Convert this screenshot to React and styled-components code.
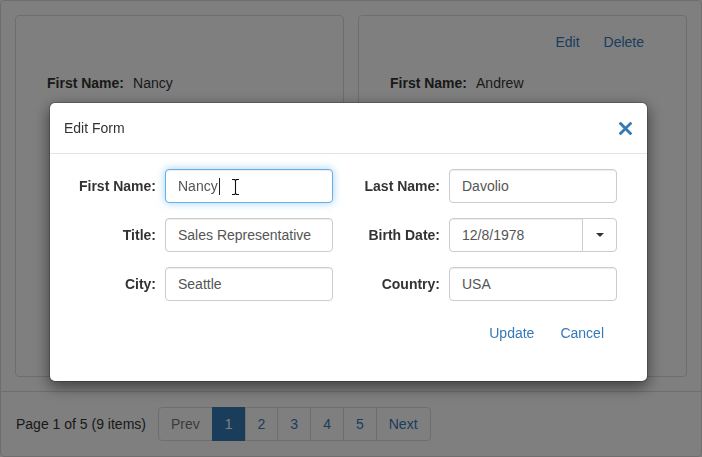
import React from "react";
import styled, { createGlobalStyle, css } from "styled-components";

const GlobalStyle = createGlobalStyle`
  html, body { margin: 0; padding: 0; background: #fff; }
  body {
    font-family: "Liberation Sans", Arial, Helvetica, sans-serif;
    font-size: 14px;
    line-height: 1.42857;
    color: #333;
  }
  *, *::before, *::after { box-sizing: border-box; }
`;

const Page = styled.div`
  width: 702px;
  height: 457px;
  border: 1px solid #ddd;
  border-radius: 4px;
  display: flex;
  flex-direction: column;
  overflow: hidden;
`;

const CardGrid = styled.div`
  flex: 1;
  padding: 14px;
  display: grid;
  grid-template-columns: 1fr 1fr;
  gap: 14px;
`;

const Card = styled.div`
  border: 1px solid #ddd;
  border-radius: 4px;
  padding: 9px 30px 0 31px;
`;

const CardActions = styled.div`
  display: flex;
  justify-content: flex-end;
  height: 34px;
  visibility: ${(p) => (p.$hidden ? "hidden" : "visible")};
`;

const LinkButton = styled.button`
  background: none;
  border: 0;
  padding: 7px 12px;
  font: inherit;
  line-height: 20px;
  color: #337ab7;
  cursor: pointer;
`;

const FieldRow = styled.div`
  margin-top: 14px;
  display: flex;
  gap: 9px;
  line-height: 20px;
`;

const FieldLabel = styled.span`
  font-weight: bold;
`;

const PagerBar = styled.div`
  border-top: 1px solid #ddd;
  padding: 15px;
  display: flex;
  align-items: center;
  gap: 12px;
`;

const PagerInfo = styled.span`
  line-height: 20px;
`;

const Pagination = styled.div`
  display: flex;
`;

const PageItem = styled.a`
  display: block;
  padding: 6px 12px;
  line-height: 20px;
  border: 1px solid #ddd;
  margin-left: -1px;
  color: #337ab7;
  background: #fff;
  text-decoration: none;
  &:first-child {
    margin-left: 0;
    border-radius: 4px 0 0 4px;
  }
  &:last-child {
    border-radius: 0 4px 4px 0;
  }
  ${(p) =>
    p.$active &&
    css`
      background: #337ab7;
      border-color: #337ab7;
      color: #fff;
    `}
  ${(p) =>
    p.$disabled &&
    css`
      color: #777;
    `}
`;

const Overlay = styled.div`
  position: fixed;
  inset: 0;
  z-index: 10;
  background: rgba(0, 0, 0, 0.5);
`;

const Modal = styled.div`
  width: 599px;
  margin: 102px 0 0 49px;
  background: #fff;
  background-clip: padding-box;
  border: 1px solid rgba(0, 0, 0, 0.2);
  border-radius: 6px;
  box-shadow: 0 5px 15px rgba(0, 0, 0, 0.5);
`;

const ModalHeader = styled.div`
  padding: 15px 15px 15px 14px;
  border-bottom: 1px solid #e5e5e5;
  display: flex;
  justify-content: space-between;
  align-items: center;
`;

const ModalTitle = styled.h4`
  margin: 0;
  font-size: 14px;
  font-weight: normal;
  line-height: 20px;
  color: #333;
`;

const CloseButton = styled.button`
  background: none;
  border: 0;
  padding: 0;
  width: 13px;
  height: 13px;
  display: flex;
  cursor: pointer;
`;

const ModalBody = styled.div`
  padding: 15px 15px 31px 15px;
`;

const FormGrid = styled.div`
  display: grid;
  grid-template-columns: 100px 168px 116px 168px;
  row-gap: 15px;
  align-items: center;
`;

const Label = styled.label`
  font-weight: bold;
  text-align: right;
  padding-right: 9px;
  line-height: 20px;
`;

const Input = styled.div`
  position: relative;
  height: 34px;
  padding: 6px 12px;
  border: 1px solid #ccc;
  border-radius: ${(p) => (p.$joined ? "4px 0 0 4px" : "4px")};
  color: #555;
  background: #fff;
  line-height: 20px;
  white-space: nowrap;
  box-shadow: inset 0 1px 1px rgba(0, 0, 0, 0.075);
  flex: 1;
  min-width: 0;
  ${(p) =>
    p.$focused &&
    css`
      border-color: #66afe9;
      box-shadow: inset 0 1px 1px rgba(0, 0, 0, 0.075),
        0 0 8px rgba(102, 175, 233, 0.6);
    `}
`;

const TextCaret = styled.span`
  display: inline-block;
  width: 1px;
  height: 17px;
  background: #222;
  vertical-align: -4px;
  margin-left: 1px;
`;

const MouseCursor = styled.svg`
  position: absolute;
  left: 65px;
  top: 8px;
`;

const DateGroup = styled.div`
  display: flex;
  height: 34px;
`;

const DropButton = styled.button`
  width: 35px;
  margin-left: -1px;
  border: 1px solid #ccc;
  border-radius: 0 4px 4px 0;
  background: #fff;
  display: flex;
  align-items: center;
  justify-content: center;
  padding: 0;
  cursor: pointer;
`;

const Caret = styled.span`
  width: 0;
  height: 0;
  border-top: 4px solid #333;
  border-left: 4px solid transparent;
  border-right: 4px solid transparent;
  margin-left: 1px;
`;

const Footer = styled.div`
  margin-top: 15px;
  padding-right: 16px;
  display: flex;
  justify-content: flex-end;
  gap: 2px;
`;

const cards = [
  { name: "Nancy", editing: true },
  { name: "Andrew", editing: false },
];

export default function App() {
  return (
    <>
      <GlobalStyle />
      <Page>
        <CardGrid>
          {cards.map((c) => (
            <Card key={c.name}>
              <CardActions $hidden={c.editing}>
                <LinkButton>Edit</LinkButton>
                <LinkButton>Delete</LinkButton>
              </CardActions>
              <FieldRow>
                <FieldLabel>First Name:</FieldLabel>
                <span>{c.name}</span>
              </FieldRow>
            </Card>
          ))}
        </CardGrid>
        <PagerBar>
          <PagerInfo>Page 1 of 5 (9 items)</PagerInfo>
          <Pagination>
            <PageItem $disabled>Prev</PageItem>
            <PageItem $active>1</PageItem>
            <PageItem>2</PageItem>
            <PageItem>3</PageItem>
            <PageItem>4</PageItem>
            <PageItem>5</PageItem>
            <PageItem>Next</PageItem>
          </Pagination>
        </PagerBar>
      </Page>
      <Overlay>
        <Modal>
          <ModalHeader>
            <ModalTitle>Edit Form</ModalTitle>
            <CloseButton aria-label="Close">
              <svg width="13" height="13" viewBox="0 0 13 13">
                <path
                  d="M1.6 1.6 L11.4 11.4 M11.4 1.6 L1.6 11.4"
                  stroke="#337ab7"
                  strokeWidth="2.8"
                  strokeLinecap="square"
                  fill="none"
                />
              </svg>
            </CloseButton>
          </ModalHeader>
          <ModalBody>
            <FormGrid>
              <Label>First Name:</Label>
              <Input $focused>
                Nancy
                <TextCaret />
                <MouseCursor width="9" height="18" viewBox="0 0 9 18">
                  <path
                    d="M1 1.5 H3.5 L4.5 2.5 L5.5 1.5 H8 M4.5 2.5 V15.5 M1 16.5 H3.5 L4.5 15.5 L5.5 16.5 H8"
                    stroke="#fff"
                    strokeWidth="2.6"
                    fill="none"
                  />
                  <path
                    d="M1 1.5 H3.5 L4.5 2.5 L5.5 1.5 H8 M4.5 2.5 V15.5 M1 16.5 H3.5 L4.5 15.5 L5.5 16.5 H8"
                    stroke="#111"
                    strokeWidth="1.1"
                    fill="none"
                  />
                </MouseCursor>
              </Input>
              <Label>Last Name:</Label>
              <Input>Davolio</Input>

              <Label>Title:</Label>
              <Input>Sales Representative</Input>
              <Label>Birth Date:</Label>
              <DateGroup>
                <Input $joined>12/8/1978</Input>
                <DropButton aria-label="Open calendar">
                  <Caret />
                </DropButton>
              </DateGroup>

              <Label>City:</Label>
              <Input>Seattle</Input>
              <Label>Country:</Label>
              <Input>USA</Input>
            </FormGrid>
            <Footer>
              <LinkButton>Update</LinkButton>
              <LinkButton>Cancel</LinkButton>
            </Footer>
          </ModalBody>
        </Modal>
      </Overlay>
    </>
  );
}
